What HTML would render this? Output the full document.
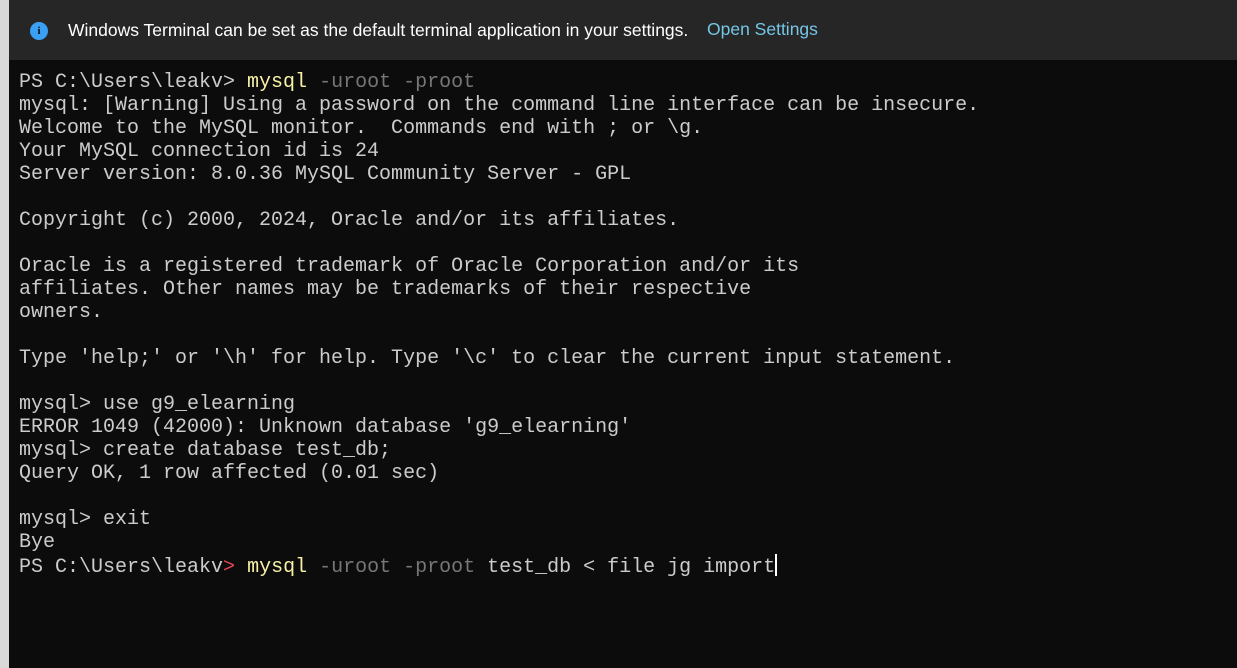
<!DOCTYPE html>
<html><head><meta charset="utf-8"><style>
html,body{margin:0;padding:0;width:1237px;height:668px;overflow:hidden;background:#0c0c0c}
.strip{position:absolute;left:0;top:0;width:9px;height:668px;background:#d9d9d9}
.banner{position:absolute;left:9px;top:0;width:1228px;height:60px;background:#262626;font-family:"Liberation Sans",sans-serif;font-size:17.5px;color:#fff}
.icon{position:absolute;left:21px;top:22px;width:18px;height:18px;border-radius:50%;background:#3aa0f3;color:#0c0c0c;font-size:11px;font-weight:bold;text-align:center;line-height:18px;font-family:"Liberation Serif",serif}
.msg{position:absolute;left:59px;top:20px;white-space:nowrap}
.link{position:absolute;left:698px;top:19px;color:#76c6e6;white-space:nowrap}
.term{position:absolute;left:19px;top:71px;font-family:"Liberation Mono",monospace;font-size:20px;line-height:23px;color:#cccccc;white-space:pre}
.y{color:#f9f1a5}.g{color:#767676}.r{color:#e74856}.w{color:#f2f2f2}
.cur{display:inline-block;width:2px;height:22px;background:#fff;vertical-align:-4px}
</style></head><body>
<div class="strip"></div>
<div class="banner"><div class="icon">i</div><div class="msg">Windows Terminal can be set as the default terminal application in your settings.</div><div class="link">Open Settings</div></div>
<div class="term">PS C:\Users\leakv&gt; <span class="y">mysql</span> <span class="g">-uroot -proot</span>
mysql: [Warning] Using a password on the command line interface can be insecure.
Welcome to the MySQL monitor.  Commands end with ; or \g.
Your MySQL connection id is 24
Server version: 8.0.36 MySQL Community Server - GPL

Copyright (c) 2000, 2024, Oracle and/or its affiliates.

Oracle is a registered trademark of Oracle Corporation and/or its
affiliates. Other names may be trademarks of their respective
owners.

Type 'help;' or '\h' for help. Type '\c' to clear the current input statement.

mysql&gt; use g9_elearning
ERROR 1049 (42000): Unknown database 'g9_elearning'
mysql&gt; create database test_db;
Query OK, 1 row affected (0.01 sec)

mysql&gt; exit
Bye
PS C:\Users\leakv<span class="r">&gt;</span> <span class="y">mysql</span> <span class="g">-uroot -proot</span> test_db &lt; file jg import<span class="cur"></span></div>
</body></html>
